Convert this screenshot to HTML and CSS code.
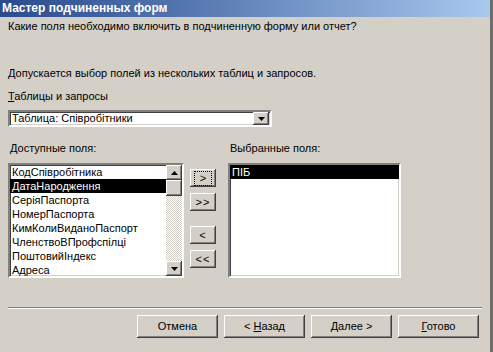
FILE: index.html
```html
<!DOCTYPE html>
<html lang="ru">
  <head>
    <meta charset="UTF-8" />
    <title>Мастер подчиненных форм</title>
    <link rel="stylesheet" href="styles.css">
  </head>
  <body>
    <div class="window">
      <div class="titlebar">Мастер подчиненных форм</div>

      <div class="content">
        <p class="question">Какие поля необходимо включить в подчиненную форму или отчет?</p>
        <p class="hint">Допускается выбор полей из нескольких таблиц и запросов.</p>

        <div class="field-label"><u>Т</u>аблицы и запросы</div>
        <div class="combo">
          <span class="combo-text">Таблица: Співробітники</span>
          <span class="btn3d combo-btn">
            <svg width="7" height="4" viewBox="0 0 7 4"><path d="M0 0h7L3.5 4z" fill="#000"/></svg>
          </span>
        </div>

        <div class="lists">
          <div class="col">
            <div class="col-label">Доступные поля:</div>
            <div class="listbox available">
              <ul class="items">
                <li>КодСпівробітника</li>
                <li class="selected">ДатаНародження</li>
                <li>СеріяПаспорта</li>
                <li>НомерПаспорта</li>
                <li>КимКолиВиданоПаспорт</li>
                <li>ЧленствоВПрофспілці</li>
                <li>ПоштовийІндекс</li>
                <li>Адреса</li>
              </ul>
              <div class="scrollbar">
                <span class="btn3d sb-btn">
                  <svg width="7" height="4" viewBox="0 0 7 4"><path d="M0 4h7L3.5 0z" fill="#000"/></svg>
                </span>
                <span class="btn3d sb-thumb"></span>
                <span class="sb-track"></span>
                <span class="btn3d sb-btn">
                  <svg width="7" height="4" viewBox="0 0 7 4"><path d="M0 0h7L3.5 4z" fill="#000"/></svg>
                </span>
              </div>
            </div>
          </div>

          <div class="movers">
            <button class="btn3d mover"><span class="focus">&gt;</span></button>
            <button class="btn3d mover">&gt;&gt;</button>
            <button class="btn3d mover mover-back">&lt;</button>
            <button class="btn3d mover">&lt;&lt;</button>
          </div>

          <div class="col">
            <div class="col-label">Выбранные поля:</div>
            <div class="listbox chosen">
              <ul class="items">
                <li class="selected">ПІБ</li>
              </ul>
            </div>
          </div>
        </div>

        <div class="separator"></div>

        <div class="actions">
          <button class="btn3d action">Отмена</button>
          <button class="btn3d action">&lt; <u>Н</u>азад</button>
          <button class="btn3d action"><u>Д</u>алее &gt;</button>
          <button class="btn3d action"><u>Г</u>отово</button>
        </div>
      </div>
    </div>
  </body>
</html>
```

FILE: styles.css
```css
* {
  margin: 0;
  padding: 0;
  box-sizing: border-box;
}

body {
  font-family: "Liberation Sans", Arial, sans-serif;
  font-size: 11px;
  line-height: 13px;
  color: #000;
  background: #d4d0c8;
}

.window {
  width: 493px;
  height: 352px;
  background: #d4d0c8;
  border-right: 3px solid #6f6d68;
  overflow: hidden;
}

.titlebar {
  height: 17px;
  padding: 2px 0 0 2px;
  background: linear-gradient(90deg, #2a4a8e 0%, #5d7fb6 45%, #a8c8ee 100%);
  color: #fff;
  font-weight: bold;
  font-size: 12px;
  line-height: 13px;
}

.content {
  padding: 3px 0 0 8px;
}

.question {
  height: 13px;
}

.hint {
  margin-top: 34px;
}

.field-label {
  margin-top: 10px;
}

/* sunken 3d frame */
.combo,
.listbox {
  border: 2px solid;
  border-color: #808080 #fff #fff #808080;
  box-shadow: inset 1px 1px #404040, inset -1px -1px #d4d0c8;
  background: #fff;
}

.btn3d {
  background: #d4d0c8;
  box-shadow: inset -1px -1px #404040, inset 1px 1px #fff,
    inset -2px -2px #808080, inset 2px 2px #d4d0c8;
}

.combo {
  margin-top: 7px;
  width: 264px;
  height: 17px;
  display: flex;
  align-items: center;
  padding: 0 1px 0 2px;
}

.combo-text {
  flex: 1;
}

.combo-btn {
  width: 16px;
  height: 13px;
  display: flex;
  align-items: center;
  justify-content: center;
}

.lists {
  margin-top: 15px;
  display: flex;
}

.col-label {
  height: 13px;
  padding-left: 2px;
}

.listbox {
  margin-top: 8px;
  height: 115px;
  display: flex;
  overflow: hidden;
}

.available {
  width: 176px;
}

.chosen {
  width: 173px;
}

.items {
  list-style: none;
  flex: 1;
}

.items li {
  height: 14px;
  line-height: 14px;
  padding-left: 2px;
  white-space: nowrap;
}

.items li.selected {
  background: #000;
  color: #fff;
}

.scrollbar {
  width: 16px;
  display: flex;
  flex-direction: column;
}

.sb-btn {
  height: 15px;
  display: flex;
  align-items: center;
  justify-content: center;
}

.sb-thumb {
  height: 16px;
}

.sb-track {
  flex: 1;
  background: repeating-conic-gradient(#fff 0 25%, #d4d0c8 0 50%) 0 0 / 2px 2px;
}

.movers {
  width: 26px;
  margin: 27px 12px 0 6px;
  display: flex;
  flex-direction: column;
  gap: 6px;
}

button {
  font-family: inherit;
  font-size: 11px;
  line-height: 13px;
  color: #000;
  border: none;
  text-align: center;
}

.mover {
  height: 18px;
  letter-spacing: 1px;
}

.mover-back {
  margin-top: 9px;
}

.focus {
  display: inline-block;
  outline: 1px dotted #000;
  padding: 0 5px;
  letter-spacing: 0;
}

.separator {
  margin-top: 29px;
  width: 474px;
  height: 2px;
  border-top: 1px solid #808080;
  border-bottom: 1px solid #fff;
}

.actions {
  margin-top: 6px;
  padding-left: 129px;
  display: flex;
  gap: 6px;
}

.action {
  width: 81px;
  height: 23px;
}
```
